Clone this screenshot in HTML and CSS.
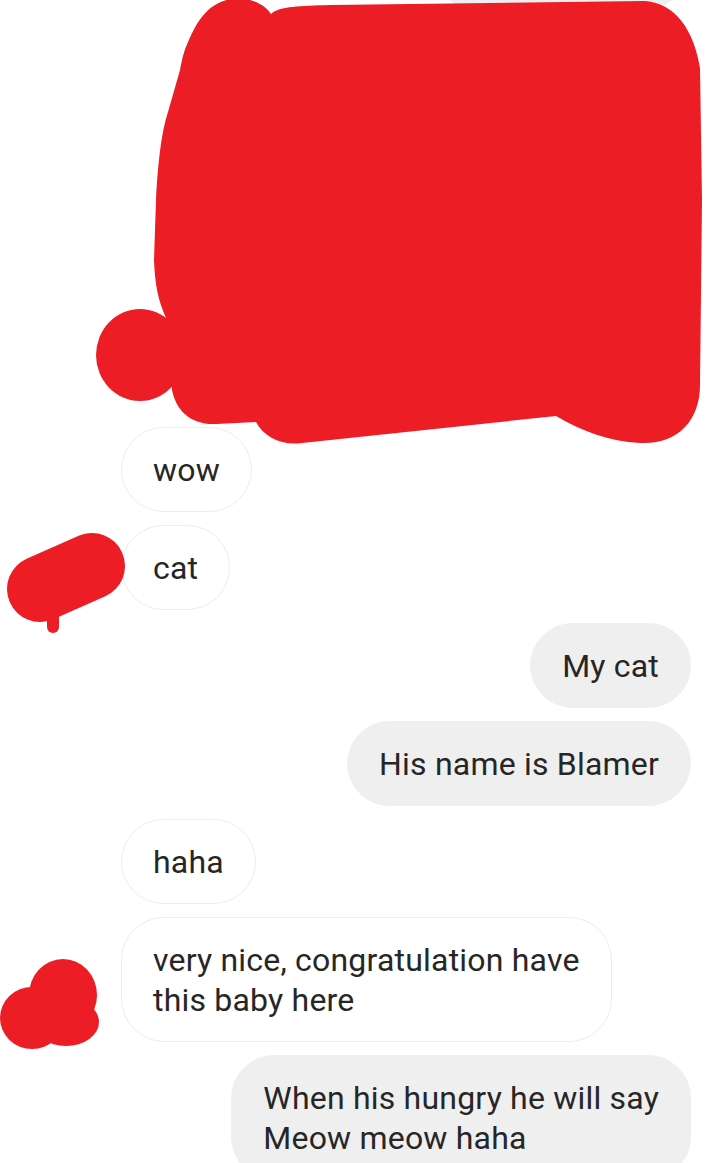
FILE: index.html
```html
<!DOCTYPE html>
<html lang="en">
<head>
<meta charset="utf-8">
<title>Chat</title>
<link rel="stylesheet" href="styles.css">
</head>
<body>
<div class="screen">
  <div class="thread">
    <div class="bubble out stub"></div>
    <div class="photo out"></div>
    <div class="bubble in">wow</div>
    <div class="bubble in">cat</div>
    <div class="bubble out">My cat</div>
    <div class="bubble out">His name is Blamer</div>
    <div class="bubble in">haha</div>
    <div class="bubble in">very nice, congratulation have<br>this baby here</div>
    <div class="bubble out">When his hungry he will say<br>Meow meow haha</div>
  </div>
  <svg class="redact" width="720" height="1163" viewBox="0 0 720 1163" aria-hidden="true">
    <g fill="#ec1d25">
      <path d="M215 5 C236 -8 262 0 271 14 C280 6 300 6 330 5 L645 1 C675 3 694 30 700 68 L702 200 L700 385 C700 422 676 445 640 443 C608 441 584 432 556 416 L302 443 C282 446 264 437 256 422 L216 424 C190 425 176 410 172 390 L166 318 C158 300 155 285 154 260 L156 200 C158 160 162 130 168 112 L180 70 C184 48 196 16 215 5 Z"/>
      <ellipse cx="140" cy="355" rx="44" ry="46"/>
    </g>
    <g stroke="#ec1d25" stroke-linecap="round" fill="none">
      <line x1="40" y1="589" x2="92" y2="566" stroke-width="66"/>
      <line x1="53" y1="600" x2="53" y2="627" stroke-width="12"/>
    </g>
    <g fill="#ec1d25">
      <ellipse cx="63" cy="995" rx="34" ry="36"/>
      <ellipse cx="32" cy="1018" rx="32" ry="31"/>
      <ellipse cx="66" cy="1022" rx="33" ry="24"/>
    </g>
  </svg>
</div>
</body>
</html>
```

FILE: styles.css
```css
html, body {
  margin: 0;
  padding: 0;
  background: #ffffff;
}

.screen {
  position: relative;
  width: 720px;
  height: 1163px;
  overflow: hidden;
  background: #ffffff;
  font-family: Roboto, "Liberation Sans", sans-serif;
  color: #262626;
}

.thread {
  display: flex;
  flex-direction: column;
  align-items: flex-start;
  gap: 13px;
  padding: 0 29px 0 121px;
}

.bubble {
  box-sizing: border-box;
  font-size: 32px;
  line-height: 40px;
  letter-spacing: 0.2px;
  padding: 21.5px 31px;
  border-radius: 43px;
  border: 1px solid transparent;
  white-space: nowrap;
}

.bubble.in {
  background: #ffffff;
  border-color: #ececec;
}

.bubble.out {
  align-self: flex-end;
  background: #efefef;
  border-color: #efefef;
}

.bubble.stub {
  width: 260px;
  height: 85px;
  margin-top: -77px;
}

.photo {
  align-self: flex-end;
  width: 509px;
  height: 393px;
  border-radius: 44px;
  background: linear-gradient(90deg, #8a8176 0%, #b9b3ab 50%, #e4e4e4 100%);
}

.redact {
  position: absolute;
  top: 0;
  left: 0;
  pointer-events: none;
}
```
